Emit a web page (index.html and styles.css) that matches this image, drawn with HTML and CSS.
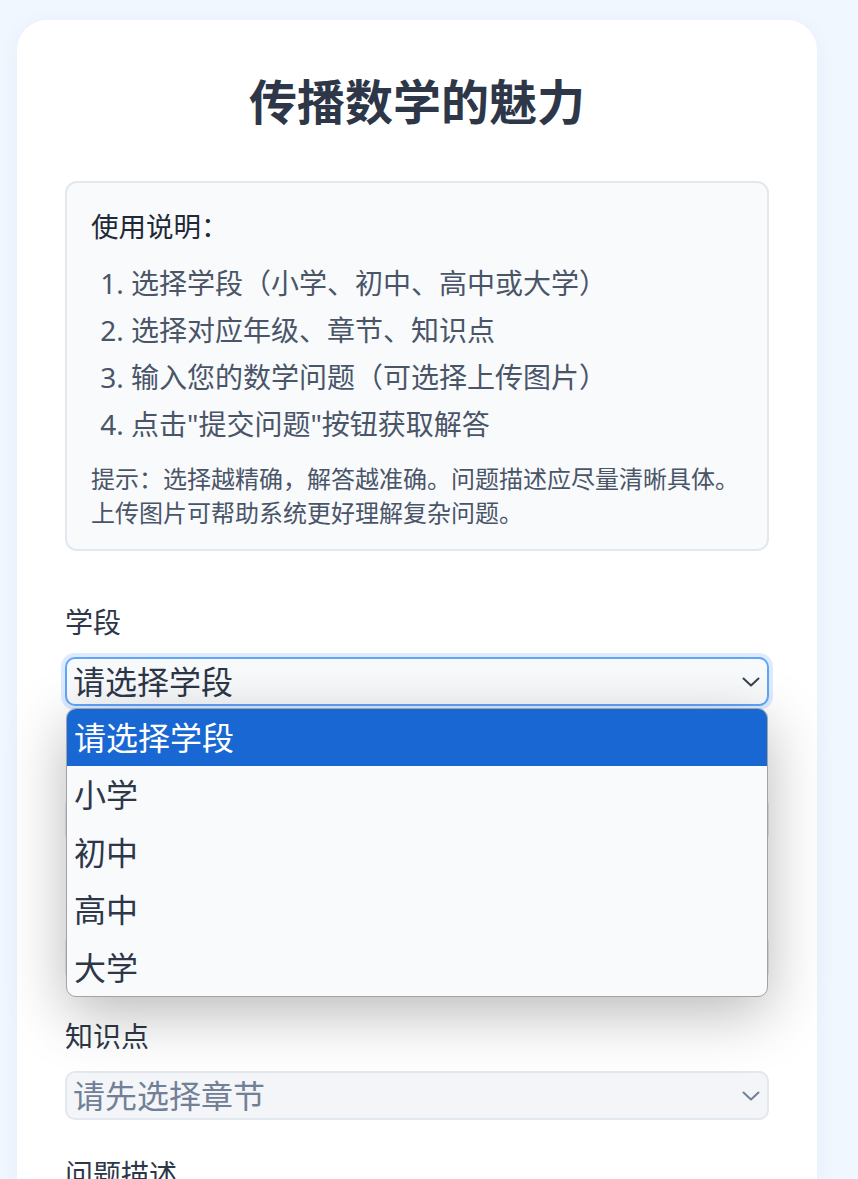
FILE: index.html
```html
<!DOCTYPE html>
<html lang="zh-CN">
<head>
<meta charset="utf-8">
<title>传播数学的魅力</title>
<link rel="stylesheet" href="styles.css">
</head>
<body>
<main class="card">
  <h1 class="title">传播数学的魅力</h1>

  <section class="info">
    <p class="info-title">使用说明：</p>
    <ol class="info-list">
      <li>选择学段（小学、初中、高中或大学）</li>
      <li>选择对应年级、章节、知识点</li>
      <li>输入您的数学问题（可选择上传图片）</li>
      <li>点击"提交问题"按钮获取解答</li>
    </ol>
    <p class="info-tip">提示：选择越精确，解答越准确。问题描述应尽量清晰具体。<br>上传图片可帮助系统更好理解复杂问题。</p>
  </section>

  <div class="group">
    <label class="label" for="stage">学段</label>
    <div class="select-wrap">
      <select id="stage" class="select focused">
        <option>请选择学段</option>
        <option>小学</option>
        <option>初中</option>
        <option>高中</option>
        <option>大学</option>
      </select>
      <svg class="chevron" viewBox="0 0 18 10" width="18" height="10"><path d="M1.5 1.5 L9 8.5 L16.5 1.5" fill="none" stroke="currentColor" stroke-width="2" stroke-linecap="round" stroke-linejoin="round"/></svg>
      <ul class="dropdown">
        <li class="opt active">请选择学段</li>
        <li class="opt">小学</li>
        <li class="opt">初中</li>
        <li class="opt">高中</li>
        <li class="opt">大学</li>
      </ul>
    </div>
  </div>

  <div class="group">
    <label class="label" for="grade">年级</label>
    <div class="select-wrap">
      <select id="grade" class="select" disabled><option>请先选择学段</option></select>
      <svg class="chevron muted" viewBox="0 0 18 10" width="18" height="10"><path d="M1.5 1.5 L9 8.5 L16.5 1.5" fill="none" stroke="currentColor" stroke-width="2" stroke-linecap="round" stroke-linejoin="round"/></svg>
    </div>
  </div>

  <div class="group">
    <label class="label" for="chapter">章节</label>
    <div class="select-wrap">
      <select id="chapter" class="select" disabled><option>请先选择年级</option></select>
      <svg class="chevron muted" viewBox="0 0 18 10" width="18" height="10"><path d="M1.5 1.5 L9 8.5 L16.5 1.5" fill="none" stroke="currentColor" stroke-width="2" stroke-linecap="round" stroke-linejoin="round"/></svg>
    </div>
  </div>

  <div class="group">
    <label class="label" for="point">知识点</label>
    <div class="select-wrap">
      <select id="point" class="select" disabled><option>请先选择章节</option></select>
      <svg class="chevron muted" viewBox="0 0 18 10" width="18" height="10"><path d="M1.5 1.5 L9 8.5 L16.5 1.5" fill="none" stroke="currentColor" stroke-width="2" stroke-linecap="round" stroke-linejoin="round"/></svg>
    </div>
  </div>

  <div class="group">
    <label class="label" for="question">问题描述</label>
    <textarea id="question" class="textarea" placeholder="请输入您的数学问题..."></textarea>
  </div>
</main>
</body>
</html>
```

FILE: styles.css
```css
* {
  box-sizing: border-box;
}

body {
  margin: 0;
  padding: 20px 17px 40px;
  background: #f0f7ff;
  font-family: "Noto Sans", "Noto Sans CJK SC", sans-serif;
  color: #2d3748;
}

.card {
  width: 800px;
  background: #ffffff;
  border-radius: 30px;
  padding: 48px;
  box-shadow: 0 4px 20px rgba(30, 60, 120, 0.05);
}

.title {
  margin: 0 0 46px;
  font-size: 48px;
  line-height: 67px;
  font-weight: 700;
  text-align: center;
  color: #2d3748;
}

.info {
  background: #f8fafc;
  border: 2px solid #e2e8f0;
  border-radius: 12px;
  padding: 24px 24px 20px;
  margin-bottom: 50px;
}

.info-title {
  margin: 0 0 13px;
  font-size: 27.5px;
  line-height: 40px;
  color: #1f2937;
}

.info-list {
  margin: 0 0 14px;
  padding-left: 40px;
  font-size: 28px;
  line-height: 47px;
  color: #4a5568;
}

.info-tip {
  margin: 0;
  font-size: 24px;
  line-height: 33.5px;
  color: #4a5568;
}

.group {
  margin-bottom: 33px;
}

.label {
  display: block;
  font-size: 28px;
  line-height: 42px;
  margin-bottom: 14px;
  color: #2d3748;
}

.select-wrap {
  position: relative;
}

.select {
  display: block;
  width: 100%;
  height: 49px;
  appearance: none;
  -webkit-appearance: none;
  margin: 0;
  padding: 0 44px 0 6px;
  font-family: inherit;
  font-size: 32px;
  color: #2d3748;
  background: #f7f9fb;
  border: 2px solid #e2e8f0;
  border-radius: 10px;
  outline: none;
}

.select.focused {
  border-color: #60a5fa;
  box-shadow: 0 0 0 4px rgba(96, 165, 250, 0.22);
  background: #f8fafc;
}

.select:disabled {
  color: #718096;
  background: #f3f5f8;
  opacity: 1;
}

.chevron {
  position: absolute;
  right: 9px;
  top: 50%;
  margin-top: -5px;
  color: #374151;
  pointer-events: none;
}

.chevron.muted {
  color: #718096;
}

.dropdown {
  position: absolute;
  z-index: 10;
  top: calc(100% + 2px);
  left: 1px;
  right: 1px;
  margin: 0;
  padding: 0;
  list-style: none;
  background: #f8fafc;
  border: 1px solid #a3a3a3;
  border-radius: 10px;
  overflow: hidden;
  box-shadow: 0 16px 60px rgba(0, 0, 0, 0.28);
}

.opt {
  padding: 0 7px;
  font-size: 32px;
  line-height: 57.4px;
  color: #2d3748;
}

.opt.active {
  background: #1967d2;
  color: #ffffff;
}

.textarea {
  display: block;
  width: 100%;
  height: 180px;
  padding: 8px;
  font-family: inherit;
  font-size: 28px;
  border: 2px solid #e2e8f0;
  border-radius: 10px;
  background: #f8fafc;
  resize: vertical;
}
```
